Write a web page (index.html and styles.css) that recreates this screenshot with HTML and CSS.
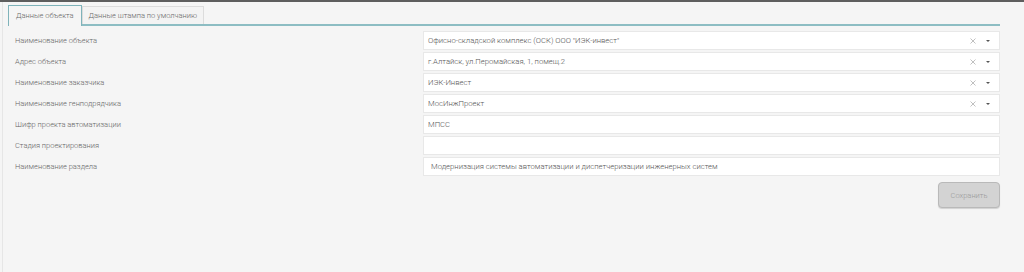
FILE: index.html
```html
<!DOCTYPE html>
<html lang="ru">
<head>
<meta charset="utf-8">
<link rel="stylesheet" href="styles.css">
</head>
<body>
<div class="topbar"></div>
<div class="page">
  <div class="tabs">
    <div class="tab active">Данные объекта</div>
    <div class="tab">Данные штампа по умолчанию</div>
  </div>
  <div class="form">
    <div class="row"><div class="label">Наименование объекта</div><div class="field select"><span class="val">Офисно-складской комплекс (ОСК) ООО "ИЭК-инвест"</span><svg class="clear" viewBox="0 0 6 6"><path d="M0.5 0.5L5.5 5.5M5.5 0.5L0.5 5.5"/></svg><span class="caret"></span></div></div>
    <div class="row"><div class="label">Адрес объекта</div><div class="field select"><span class="val">г.Алтайск, ул.Перомайская, 1, помещ.2</span><svg class="clear" viewBox="0 0 6 6"><path d="M0.5 0.5L5.5 5.5M5.5 0.5L0.5 5.5"/></svg><span class="caret"></span></div></div>
    <div class="row"><div class="label">Наименование заказчика</div><div class="field select"><span class="val">ИЭК-Инвест</span><svg class="clear" viewBox="0 0 6 6"><path d="M0.5 0.5L5.5 5.5M5.5 0.5L0.5 5.5"/></svg><span class="caret"></span></div></div>
    <div class="row"><div class="label">Наименование генподрядчика</div><div class="field select"><span class="val">МосИнжПроект</span><svg class="clear" viewBox="0 0 6 6"><path d="M0.5 0.5L5.5 5.5M5.5 0.5L0.5 5.5"/></svg><span class="caret"></span></div></div>
    <div class="row"><div class="label">Шифр проекта автоматизации</div><div class="field"><span class="val">МПСС</span></div></div>
    <div class="row"><div class="label">Стадия проектирования</div><div class="field"><span class="val"></span></div></div>
    <div class="row"><div class="label">Наименование раздела</div><div class="field"><span class="val indent">Модернизация системы автоматизации и диспетчеризации инженерных систем</span></div></div>
    <div class="actions"><button class="save">Сохранить</button></div>
  </div>
</div>
</body>
</html>
```
FILE: styles.css
```css
html, body {
  margin: 0;
  padding: 0;
  background: #f5f5f5;
  font-family: Roboto, "Liberation Sans", Arial, sans-serif;
  font-size: 7.5px;
  font-weight: 300;
  color: #666;
}
.topbar {
  height: 2px;
  background: #5e5e5e;
}
.page {
  height: 270px;
  margin-left: 2px;
  border-left: 1px solid #e6e6e6;
  padding: 3px 24px 0 5px;
}
.tabs {
  display: flex;
  align-items: flex-end;
  border-bottom: 2px solid #8dbdc3;
  height: 19px;
}
.tab {
  height: 17px;
  line-height: 17px;
  padding: 0 6px;
  border: 1px solid #dcdcdc;
  border-bottom: none;
  background: #f3f3f3;
  color: #666;
}
.tab.active {
  line-height: 19px;
  padding: 0 7px;
  border: 1px solid #7fb3ba;
  border-bottom: none;
  background: #f5f5f5;
  margin-bottom: -2px;
  height: 20px;
}
.form {
  padding: 5px 0 0 7px;
  display: flex;
  flex-direction: column;
  gap: 2px;
}
.row {
  display: grid;
  grid-template-columns: 408px 1fr;
  align-items: center;
  height: 19px;
}
.label {
  color: #666;
}
.field {
  height: 17px;
  border: 1px solid #e8e8e8;
  background: #fff;
  display: flex;
  align-items: center;
  padding: 0 4px;
  color: #555;
  font-size: 7.7px;
}
.val {
  flex: 1;
  white-space: nowrap;
}
.val.indent {
  padding-left: 3px;
}
.clear {
  width: 6px;
  height: 6px;
  stroke: #b0b0b0;
  stroke-width: 0.8;
  fill: none;
  margin-right: 10px;
}
.caret {
  width: 0;
  height: 0;
  border-left: 2px solid transparent;
  border-right: 2px solid transparent;
  border-top: 2.5px solid #555;
  margin-right: 5px;
}
.actions {
  display: flex;
  justify-content: flex-end;
  padding-top: 4px;
}
.save {
  width: 62px;
  height: 26px;
  border: 1px solid #b9b9b9;
  border-radius: 4px;
  background: #d3d3d3;
  color: #9a9a9a;
  font-family: Roboto, "Liberation Sans", Arial, sans-serif;
  font-size: 7.5px;
  font-weight: 300;
  box-shadow: 0 1px 1px rgba(0,0,0,0.15);
  padding: 0;
}
```
